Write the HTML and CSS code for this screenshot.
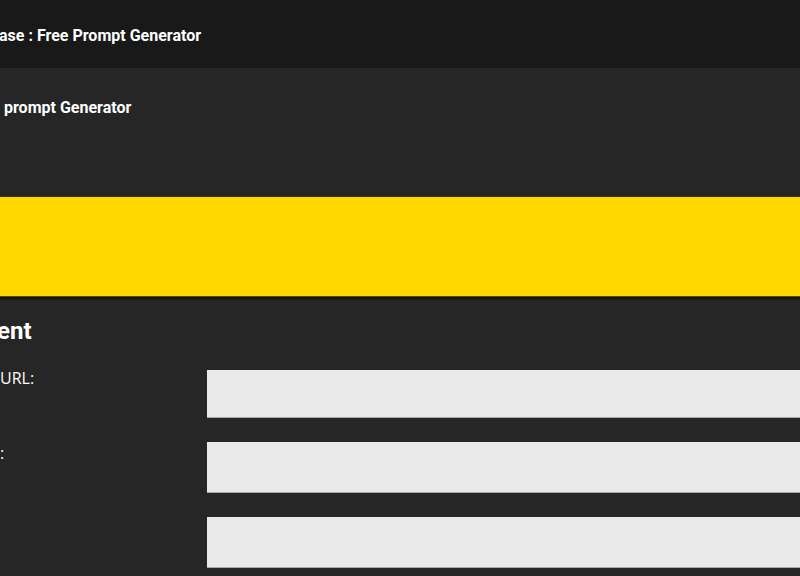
FILE: index.html
```html
<!DOCTYPE html>
<html>
  <head>
    <meta charset="utf-8" />
    <title>Free Prompt Generator</title>
    <link rel="stylesheet" href="styles.css">
  </head>
  <body>
    <header class="topbar">
      <h1>ase : Free Prompt Generator</h1>
    </header>

    <section class="intro">
      <h2>prompt Generator</h2>
    </section>

    <div class="banner"></div>

    <main class="generator">
      <h2>ent</h2>

      <form class="fields">
        <div class="field">
          <label for="url">URL:</label>
          <input id="url" type="text">
        </div>
        <div class="field tall">
          <label for="subject">:</label>
          <input id="subject" type="text">
        </div>
        <div class="field tall">
          <label for="style"></label>
          <input id="style" type="text">
        </div>
      </form>
    </main>
  </body>
</html>
```

FILE: styles.css
```css
/* || Initial styles */

html {
  font-family: Roboto, "Liberation Sans", sans-serif;
}

* {
  box-sizing: border-box;
}

body {
  margin: 0;
  background-color: #262626;
  color: white;
  overflow: hidden;
}

/* || Page styles */

.topbar {
  height: 68px;
  display: flex;
  align-items: center;
  background-color: #191919;
}

.topbar h1 {
  margin: 2px 0 0 -1px;
  font-size: 16px;
  font-weight: bold;
}

.intro {
  height: 128px;
  padding-top: 30px;
  padding-left: 4px;
}

.intro h2 {
  margin: 0;
  font-size: 16px;
  font-weight: bold;
}

.banner {
  height: 101px;
  background-color: #ffd800;
  border-top: 1px solid #3a3300;
  border-bottom: 1px solid #5c4f00;
  box-shadow: 0 2px 2px rgba(0, 0, 0, 0.6);
}

.generator {
  padding-top: 20px;
}

.generator h2 {
  margin: 0 0 25px -3px;
  font-size: 24px;
  font-weight: bold;
}

.fields {
  display: flex;
  flex-direction: column;
  gap: 24px;
}

.field {
  display: flex;
  align-items: flex-start;
}

.field label {
  width: 207px;
  flex-shrink: 0;
  font-family: "Open Sans", "Noto Sans", sans-serif;
  font-size: 16px;
  line-height: 1.1;
}

.field:first-child label::before {
  content: " ";
}

.field input {
  width: 640px;
  flex-shrink: 0;
  height: 48px;
  margin: 0;
  border: none;
  border-bottom: 1px solid #a8a8a8;
  background-color: #e9e9e9;
}

.field.tall input {
  height: 51px;
}

.field.tall label {
  margin-top: 3px;
}
```
